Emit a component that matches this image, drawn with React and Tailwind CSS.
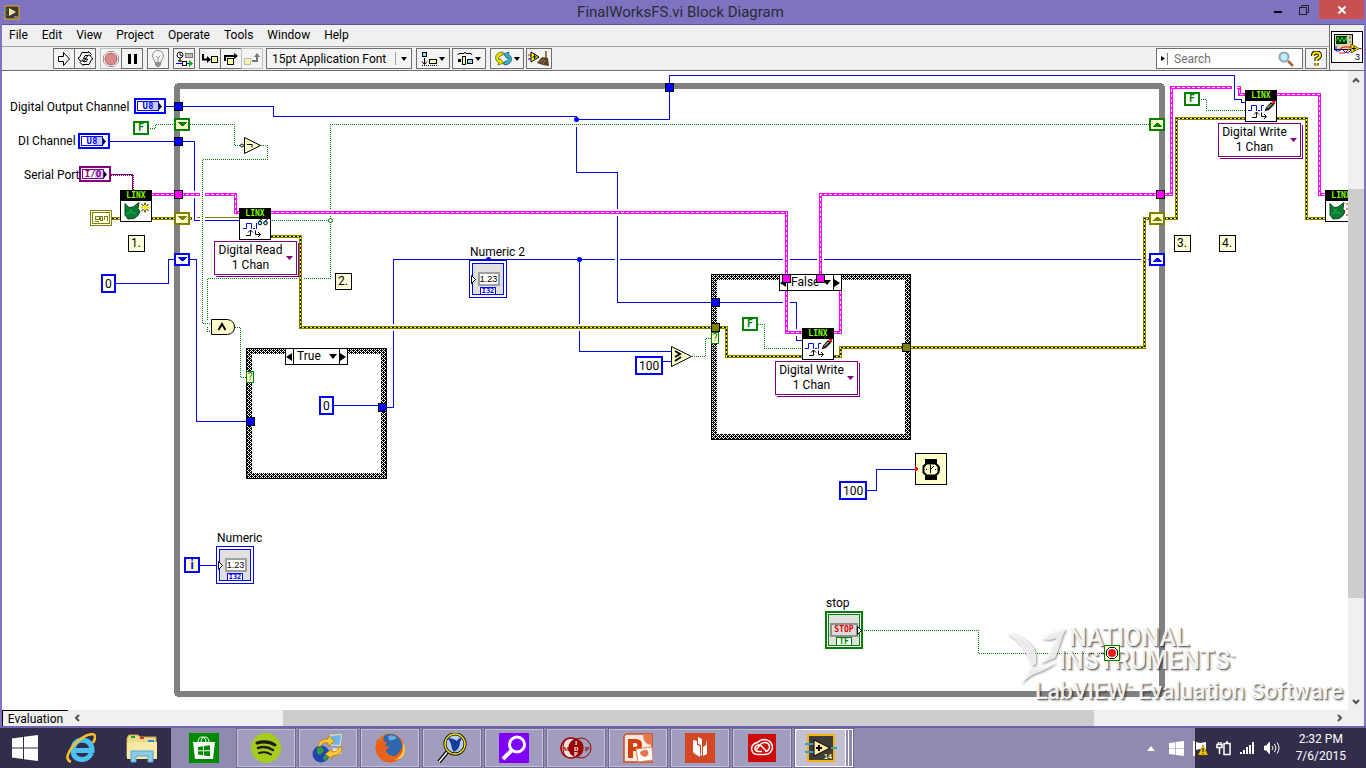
const BLUE = '#0000ff';
const GREEN = '#008000';

// Wires are drawn in order, a later wire jumps over the earlier ones
const WIRES = [
  { kind: 'int', d: 'M393.5 407.5V259.5H1150' },
  { kind: 'int', d: 'M386 407.5H393.5V259.5' },
  { kind: 'int', d: 'M166 106.5H273.5V116.5H576.5V119.5H669.5V75.5H1234.5V84' },
  { kind: 'int', d: 'M576.5 119V172.5H617.5V302.5H796.5V340.5H802' },
  { kind: 'int', d: 'M113 283.5H168.5V259.5H196.5V421.5H248' },
  { kind: 'int', d: 'M332 405.5H380' },
  { kind: 'int', d: 'M579.5 259V351.5H672' },
  { kind: 'int', d: 'M660 363.5V361.5H672' },
  { kind: 'int', d: 'M864 490.5H876.5V469.5H916' },
  { kind: 'int', d: 'M200 565.5H217' },
  { kind: 'bool', d: 'M149 128.5H155.5V124.5H234.5V145.5H241' },
  { kind: 'bool', d: 'M1150 124.5H330.5V278.5H207.5V331.5H211' },
  { kind: 'bool', d: 'M271 220.5H330' },
  { kind: 'bool', d: 'M235 327.5H240.5V377.5H247' },
  { kind: 'bool', d: 'M692 356.5H705.5V338.5H711' },
  { kind: 'bool', d: 'M758 324.5H764.5V348.5H802' },
  { kind: 'bool', d: 'M1200 99.5H1206.5V110.5H1245' },
  { kind: 'bool', d: 'M863 630.5H978.5V653.5H1104' },
  { kind: 'link', d: 'M151 194.5H235.5V212.5H239' },
  { kind: 'link', d: 'M271 212.5H786.5V332.5H802' },
  { kind: 'link', d: 'M834 332.5H840.5V285' },
  { kind: 'link', d: 'M820.5 276V194.5H1171.5V87.5H1239.5V94.5H1245' },
  { kind: 'link', d: 'M1277 94.5H1319.5V194.5H1325' },
  { kind: 'int', d: 'M1234.5 80V99.5H1241.5V102.5H1245' },
  { kind: 'error', d: 'M112 218.5H120' },
  { kind: 'error', d: 'M151 218.5H239' },
  { kind: 'error', d: 'M271 236.5H300.5V327.5H726.5V356.5H802' },
  { kind: 'error', d: 'M834 356.5H840.5V347.5H1144.5V218.5H1176.5V118.5H1245' },
  { kind: 'error', d: 'M1277 118.5H1306.5V218.5H1325' },
  { kind: 'int', d: 'M110 141.5H194.5V191' },
  { kind: 'int', d: 'M194.5 198V220.5H239' },
  { kind: 'bool', d: 'M261 145.5H267.5V159.5H202.5V323.5H211' },
  { kind: 'io', d: 'M111 174.5H132.5V191' },
];

function Wire({ kind, d }) {
  if (kind === 'int') {
    return (
      <>
        <path d={d} stroke="#fff" strokeWidth="5" />
        <path d={d} stroke={BLUE} />
      </>
    );
  }
  if (kind === 'bool') {
    return (
      <>
        <path d={d} stroke="#fff" strokeWidth="5" />
        <path d={d} stroke="url(#dots)" />
      </>
    );
  }
  if (kind === 'link') {
    return (
      <>
        <path d={d} stroke="#fff" strokeWidth="7" />
        <path d={d} stroke="#ff00ff" strokeWidth="3" />
        <path d={d} stroke="#fff" strokeDasharray="3 2" />
      </>
    );
  }
  if (kind === 'error') {
    return (
      <>
        <path d={d} stroke="#fff" strokeWidth="7" />
        <path d={d} stroke="#808000" strokeWidth="3" />
        <path d={d} stroke="#ffff00" />
        <path d={d} stroke="#000" strokeDasharray="2 2" />
      </>
    );
  }
  return (
    <>
      <path d={d} stroke="#800080" strokeWidth="2" strokeDasharray="1 1" />
      <path d={d} stroke="#800080" />
    </>
  );
}

function CaseFrame({ x, y, w, h }) {
  return (
    <>
      <rect x={x + 3} y={y + 3} width={w - 6} height={h - 6} stroke="url(#hatch)" strokeWidth="6" />
      <rect x={x + 0.5} y={y + 0.5} width={w - 1} height={h - 1} stroke="#000" />
    </>
  );
}

function Tunnel({ x, y, fill }) {
  return <rect x={x + 0.5} y={y + 0.5} width="8" height="8" fill={fill} stroke="#000" />;
}

function ShiftRegister({ x, y, color, fill, up }) {
  return (
    <g transform={`translate(${x} ${y})`}>
      <rect x="1" y="1" width="14" height="11" fill={fill} stroke={color} strokeWidth="2" />
      <path d={up ? 'M3 9h10l-4-4h-2z' : 'M3 4h10l-4 4h-2z'} fill={color} />
    </g>
  );
}

// Places a diagram object on the canvas, in window coordinates
function Node({ x, y, className = '', children }) {
  return (
    <div className={`absolute ${className}`} style={{ left: x - 2, top: y - 71 }}>
      {children}
    </div>
  );
}

function Label({ x, y, children }) {
  return <Node x={x} y={y} className="whitespace-nowrap leading-4">{children}</Node>;
}

function NumConst({ x, y, children }) {
  return (
    <Node x={x} y={y} className="flex h-[19px] items-center border-2 border-[#0000ff] bg-white px-[2px] leading-4">
      {children}
    </Node>
  );
}

function BoolConst({ x, y }) {
  return (
    <Node x={x} y={y} className="flex h-[14px] w-4 items-center justify-center border-2 border-[#008000] bg-white font-['DejaVu_Sans_Mono',monospace] text-[10px] font-bold leading-none text-[#008000]">
      F
    </Node>
  );
}

function Note({ x, y, children }) {
  return (
    <Node x={x} y={y} className="h-[17px] w-[17px] border border-black bg-[#ffffdc] pl-[2px] leading-[15px]">
      {children}
    </Node>
  );
}

function ControlTerminal({ x, y, tone, children }) {
  const tones = {
    blue: 'border-[#0000ff] text-[#0000ff]',
    purple: 'border-[#800080] text-[#800080]',
  };
  return (
    <Node x={x} y={y} className={`flex h-4 w-8 border-2 bg-white p-px ${tones[tone]}`}>
      <div className={`flex flex-1 items-center justify-center border bg-linear-to-r from-white from-60% to-[#c8c8ff] to-60% font-['DejaVu_Sans_Mono',monospace] text-[9px] font-bold leading-none ${tones[tone]}`}>
        {children}
      </div>
      <svg className="my-auto h-[7px] w-1" viewBox="0 0 4 7"><path d="M0 0v7l3-3.500z" fill="#000" /></svg>
    </Node>
  );
}

function NumericTerminal({ x, y }) {
  return (
    <Node x={x} y={y} className="h-[38px] w-[38px] border border-[#0000ff] bg-white p-[2px]">
      <div className="relative flex h-full flex-col items-center justify-between border border-[#0000ff] bg-[#e0e0e0] pt-2">
        <div className="ml-px w-[22px] border-2 border-[#a0a0a0] bg-white text-center font-['Liberation_Sans',sans-serif] text-[9px] leading-[10px]">1.23</div>
        <div className="h-[7px] w-4 border-x border-t border-[#0000ff] bg-white text-center font-['DejaVu_Sans_Mono',monospace] text-[7px] font-bold leading-[7px] text-[#0000ff]">I32</div>
        <svg className="absolute -left-[2px] top-[11px] h-[9px] w-[5px]" viewBox="0 0 5 9"><path d="M.5.5v8l4-4z" fill="#fff" stroke="#000" /></svg>
      </div>
    </Node>
  );
}

function Arrows() {
  return <path d="M6 16.500h4.500V11.500M8 13.500l2.500-2.500 2.500 2.500M15.500 11.500v4H20M18 13l2.500 2.500-2.500 2.500" stroke="#000" fill="none" />;
}

function WriteGlyph() {
  return (
    <svg className="block h-5 w-[30px]" viewBox="0 0 30 20" fill="none">
      <path d="M2 9.500h3.500v-5h5v5.500M12 9.500h2M15.500 10V4.500H18" stroke={BLUE} />
      <path d="M18.500 10.500l1.500-4 5-5.500 3.500 2.500-5.500 5.500z" fill="#222" />
      <path d="M21.500 7l4-4" stroke="#f5e58c" />
      <path d="M26 0h3v3h-2z" fill="#ff0000" />
      <Arrows />
    </svg>
  );
}

function ReadGlyph() {
  return (
    <svg className="block h-5 w-[30px]" viewBox="0 0 30 20" fill="none">
      <path d="M3 9.500h3.500v-5h5v5.500M13 9.500h2M16.500 4v6" stroke={BLUE} />
      <circle cx="20" cy="4" r="1.800" fill="#7ff" stroke="#000" />
      <circle cx="25.500" cy="4" r="1.800" fill="#7ff" stroke="#000" />
      <path d="M19 2l3-2M25 2l3-2" stroke="#000" />
      <Arrows />
    </svg>
  );
}

function OpenGlyph({ close }) {
  return (
    <svg className="block h-5 w-[30px]" viewBox="0 0 30 20">
      <path d="M4 2.500l4 4 4-.5 6-4.500-1 6 2 3-2 4-4 3-6 .5-3-4z" fill="#0a7a32" stroke="#064a1c" />
      <path d="M5 13l5-2 5 2M8 9l3 1" stroke="#25b050" fill="none" />
      {close ? (
        <path d="M20 3h2M20 8h2M20 14h2" stroke="#f00" />
      ) : (
        <>
          <path d="M24 2v9M19.500 6.500h9" stroke="#ffe600" strokeWidth="2" />
          <path d="M20.500 3l2 2M25.500 5l2-2M20.500 10l2-2M25.500 8l2 2M24 1.500v2.500M24 9v2.500" stroke="#000" />
        </>
      )}
    </svg>
  );
}

function LinxNode({ x, y, children }) {
  return (
    <Node x={x} y={y} className="h-8 w-8 overflow-hidden border border-black bg-white">
      <div className="h-[10px] bg-black text-center font-['DejaVu_Sans_Mono',monospace] text-[8px] font-bold leading-[9px] text-[#80ff00]">LINX</div>
      {children}
    </Node>
  );
}

function PolySelector({ x, y, children }) {
  return (
    <Node x={x} y={y}>
      <button type="button" className="flex h-[34px] w-[83px] items-center border border-[#800080] bg-white shadow-[1px_1px_0_#fff,2px_2px_0_#800080] outline-none">
        <span className="flex-1 whitespace-nowrap text-center leading-[15px]">{children}<br />1 Chan</span>
        <svg className="mr-[3px] h-1 w-[7px] shrink-0" viewBox="0 0 7 4"><path d="M0 0h7l-3.500 4z" fill="#800080" /></svg>
      </button>
    </Node>
  );
}

function CaseSelector({ x, y, value, other }) {
  return (
    <Node x={x} y={y} className="flex h-[17px] w-[63px] border border-black bg-white">
      <button type="button" aria-label="Previous case" className="w-2 border-r border-black">
        <svg className="h-2 w-[6px]" viewBox="0 0 6 8"><path d="M6 0v8l-6-4z" /></svg>
      </button>
      <div className="relative flex flex-1 items-center">
        <select aria-label="Case" defaultValue={value} className="w-full appearance-none bg-transparent pl-[3px] leading-[15px] outline-none">
          <option>{value}</option>
          <option>{other}</option>
        </select>
        <svg className="pointer-events-none absolute right-[2px] top-[5px] h-[5px] w-2" viewBox="0 0 8 5"><path d="M0 0h8l-4 5z" /></svg>
      </div>
      <button type="button" aria-label="Next case" className="w-2 border-l border-black">
        <svg className="h-2 w-[6px]" viewBox="0 0 6 8"><path d="M0 0v8l6-4z" /></svg>
      </button>
    </Node>
  );
}

function Diagram() {
  return (
    <main className="relative min-w-0 flex-1 overflow-hidden bg-white text-[12px] text-black">
      <svg className="absolute left-0 top-0 h-[639px] w-[1346px]" viewBox="2 71 1346 639" fill="none" shapeRendering="crispEdges">
        <defs>
          <pattern id="hatch" width="4" height="4" patternUnits="userSpaceOnUse">
            <rect width="4" height="4" fill="#000" />
            <path d="M1 0h1v1H1zM0 1h1v1H0zM2 1h1v1H2zM3 2h1v1H3zM0 3h1v1H0zM2 3h1v1H2z" fill="#fff" />
          </pattern>
          <pattern id="dots" width="2" height="2" patternUnits="userSpaceOnUse">
            <path d="M0 0h1v1H0zM1 1h1v1H1z" fill={GREEN} />
          </pattern>
        </defs>
        {WIRES.map((wire, i) => <Wire key={i} {...wire} />)}
        <rect x="177" y="86" width="985" height="608" rx="2" stroke="#808080" strokeWidth="6" />
        <CaseFrame x={246} y={348} w={141} h={131} />
        <CaseFrame x={711} y={274} w={200} h={166} />

        {/* Wire junctions */}
        <g fill={BLUE} shapeRendering="auto">
          <circle cx="576.500" cy="119.500" r="2.500" />
          <circle cx="579.500" cy="259.500" r="2.500" />
          <circle cx="488.500" cy="259.500" r="2.500" />
        </g>
        <circle cx="330.500" cy="220.500" r="2" stroke={GREEN} fill="#fff" shapeRendering="auto" />

        <Tunnel x={174} y={102} fill={BLUE} />
        <Tunnel x={174} y={137} fill={BLUE} />
        <Tunnel x={174} y={190} fill="#ff00ff" />
        <Tunnel x={665} y={83} fill={BLUE} />
        <Tunnel x={1156} y={190} fill="#ff00ff" />
        <Tunnel x={246} y={417} fill={BLUE} />
        <Tunnel x={378} y={403} fill={BLUE} />
        <Tunnel x={711} y={298} fill={BLUE} />
        <Tunnel x={711} y={323} fill="#808000" />
        <Tunnel x={902} y={343} fill="#808000" />

        <ShiftRegister x={174} y={118} color={GREEN} fill="#ffffcc" />
        <ShiftRegister x={174} y={212} color="#808000" fill="#ffffcc" />
        <ShiftRegister x={174} y={253} color={BLUE} fill="#fff" />
        <ShiftRegister x={1149} y={118} color={GREEN} fill="#ffffcc" up />
        <ShiftRegister x={1149} y={212} color="#808000" fill="#ffffcc" up />
        <ShiftRegister x={1149} y={253} color={BLUE} fill="#fff" up />

        {/* Not, And, Greater or equal */}
        <g shapeRendering="auto" stroke="#000" fill="#ffffcc">
          <path d="M244.500 137.500v16l16-8z" />
          <circle cx="242" cy="145.500" r="1.500" />
          <path d="M247 144.500h5v3" fill="none" />
          <path d="M211.500 319.500h16q7 1 7 7.500t-7 7.500h-16z" />
          <path d="M218.500 330l3.500-6 3.500 6" strokeWidth="2" fill="none" />
          <path d="M671.500 346.500v20l20-10z" />
          <path d="M675 351l5 3-5 3M675 361l6-4" strokeWidth="2" fill="none" />
        </g>

        {/* Wait (ms) */}
        <rect x="915.500" y="453.500" width="31" height="31" fill="#ffffcc" stroke="#000" />
        <path d="M915 466l3 3-3 3z" fill="#ff0000" />
        <rect x="925" y="459" width="12" height="21" fill="#000" />
        <rect x="938" y="467" width="2" height="4" fill="#000" />
        <path d="M926.500 463.500h9l3 3v6l-3 3h-9l-3-3v-6z" fill="#ffffcc" stroke="#000" strokeWidth="2" shapeRendering="auto" />
        <path d="M930.500 465v8M930 470l4-4M926 469.500h1M935 469.500h1" stroke="#000" />

        {/* Error constant */}
        <rect x="90.500" y="210.500" width="21" height="15" fill="#fff" stroke="#808000" />
        <rect x="92.500" y="212.500" width="17" height="11" stroke="#808000" />
        <path d="M95 216.500h4v3h-4zM100.500 216v4h2v-4zM104.500 220v-4h3v5M95 221.500h4" stroke="#808000" />
      </svg>

      <Label x={10} y={99}>Digital Output Channel</Label>
      <Label x={18} y={133}>DI Channel</Label>
      <Label x={24} y={167}>Serial Port 2</Label>
      <Label x={470} y={244}>Numeric 2</Label>
      <Label x={217} y={530}>Numeric</Label>
      <Label x={826} y={595}>stop</Label>

      <ControlTerminal x={134} y={98} tone="blue">U8</ControlTerminal>
      <ControlTerminal x={78} y={133} tone="blue">U8</ControlTerminal>
      <ControlTerminal x={79} y={166} tone="purple">I/O</ControlTerminal>

      <BoolConst x={133} y={121} />
      <BoolConst x={742} y={317} />
      <BoolConst x={1184} y={92} />

      <NumConst x={101} y={274}>0</NumConst>
      <NumConst x={319} y={396}>0</NumConst>
      <NumConst x={635} y={356}>100</NumConst>
      <NumConst x={839} y={481}>100</NumConst>

      <Node x={184} y={557} className="flex h-4 w-4 items-center justify-center border-2 border-[#0000ff] bg-[#ffffcc] font-bold leading-none text-[#0000ff]">i</Node>

      <Note x={128} y={235}>1.</Note>
      <Note x={335} y={273}>2.</Note>
      <Note x={1174} y={235}>3.</Note>
      <Note x={1219} y={235}>4.</Note>

      <LinxNode x={120} y={190}><OpenGlyph /></LinxNode>
      <LinxNode x={239} y={208}><ReadGlyph /></LinxNode>
      <LinxNode x={802} y={328}><WriteGlyph /></LinxNode>
      <LinxNode x={1245} y={90}><WriteGlyph /></LinxNode>
      <LinxNode x={1325} y={190}><OpenGlyph close /></LinxNode>

      <PolySelector x={214} y={241}>Digital Read</PolySelector>
      <PolySelector x={775} y={361}>Digital Write</PolySelector>
      <PolySelector x={1218} y={123}>Digital Write</PolySelector>

      <CaseSelector x={285} y={348} value="True" other="False" />
      <CaseSelector x={779} y={274} value="False" other="True" />
      <Node x={782} y={274} className="h-[9px] w-[9px] border border-black bg-[#ff00ff]" />
      <Node x={816} y={274} className="h-[9px] w-[9px] border border-black bg-[#ff00ff]" />

      {/* Case selector terminals */}
      <Node x={246} y={371} className="h-3 w-2 border border-[#008000] bg-[#ffffcc] text-center text-[10px] leading-[10px] text-[#008000]">?</Node>
      <Node x={711} y={332} className="h-3 w-2 border border-[#008000] bg-[#ffffcc] text-center text-[10px] leading-[10px] text-[#008000]">?</Node>

      <NumericTerminal x={469} y={260} />
      <NumericTerminal x={216} y={546} />

      {/* Stop button terminal */}
      <Node x={825} y={611} className="h-[38px] w-[38px] border-2 border-[#008000] bg-white p-px">
        <div className="relative flex h-full flex-col items-center justify-between border border-[#008000] bg-[#e0e0e0] pt-2">
          <div className="w-[28px] border-2 border-[#909090] bg-[#dcdcdc] text-center font-['DejaVu_Sans_Mono',monospace] text-[8px] font-bold leading-[10px] text-[#e00000]">STOP</div>
          <div className="h-2 w-4 border-x border-t border-[#008000] bg-white text-center font-['DejaVu_Sans_Mono',monospace] text-[8px] font-bold leading-[7px] text-[#008000]">TF</div>
          <svg className="absolute -right-[3px] top-[11px] h-[9px] w-[5px]" viewBox="0 0 5 9"><path d="M.5.5v8l4-4z" fill="#fff" stroke="#000" /></svg>
        </div>
      </Node>

      {/* Watermark */}
      <Node x={1004} y={626} className="pointer-events-none">
        <svg className="h-[72px] w-16 drop-shadow-[1px_1px_1px_#00000080]" viewBox="0 0 64 72" fill="#fff" fillOpacity="0.8">
          <path d="M3 8q12 0 20 7 8 6 9 14v9l-4 2-3-7Q17 15 3 8z" />
          <path d="M38 13q5-5 10-7 7-2 14-3-3 5-5 12-3 10-6 17l-15 6 10-12q2-8 7-14l-8 2z" />
          <path d="M17 58l10-18 8 2 18-6q-8 7-20 11-8 3-16 11z" />
        </svg>
      </Node>
      <div className="pointer-events-none whitespace-nowrap text-white/90 [text-shadow:1px_1px_1px_#00000080,2px_2px_2px_#00000040]">
        <Node x={1069} y={626} className="text-[25px] font-medium leading-[24px]">NATIONAL</Node>
        <Node x={1059} y={649} className="text-[25px] font-medium leading-[24px]">INSTRUMENTS<sup className="-top-2 text-[8px]">™</sup></Node>
        <Node x={1035} y={680} className="text-[23px] font-medium leading-[24px]">LabVIEW<sup className="-top-2 text-[8px]">™</sup> Evaluation Software</Node>
      </div>

      {/* Loop condition */}
      <Node x={1104} y={645} className="flex h-4 w-4 items-center justify-center border border-[#008000] bg-[#ffffcc]">
        <svg className="h-[14px] w-[14px]" viewBox="0 0 14 14">
          <path d="M4.500 1.500h5l3 3v5l-3 3h-5l-3-3v-5z" fill="#fff" stroke="#000" />
          <circle cx="7" cy="7" r="4" fill="#f01818" />
        </svg>
      </Node>
    </main>
  );
}

function ToolButton({ label, wide, faded, className = '', children }) {
  return (
    <button
      type="button"
      aria-label={label}
      className={`flex h-[21px] items-center justify-center border bg-[#f4f4f4] ${wide ? 'w-[34px]' : 'w-[22px]'} ${faded ? 'border-[#c0c0c0]' : 'border-[#6e6e6e]'} ${className}`}
    >
      {children}
    </button>
  );
}

function Caret() {
  return <svg className="h-1 w-[6px]" viewBox="0 0 6 4"><path d="M0 0h6l-3 4z" /></svg>;
}

function Toolbar() {
  return (
    <div className="flex h-6 items-center border-t border-[#a0a0a0] pl-[51px] pr-[2px]">
      <ToolButton label="Run">
        <svg className="h-4 w-4" viewBox="0 0 16 16"><path d="M2.500 5.500h5v-4l6 6.500-6 6.500v-4h-5z" fill="#fff" stroke="#000" /></svg>
      </ToolButton>
      <ToolButton label="Run Continuously" className="-ml-px">
        <svg className="h-[15px] w-[17px]" viewBox="0 0 17 15" fill="#fff" stroke="#000">
          <path d="M2.500 6.500L5 1.500h6.500V.5l3 3-3 3V4.500H8L6.500 7.500H9L5 12 1 7z" />
          <path d="M14.500 8.500L12 13.500H6v1l-3-3 3-3v2h3.500l1-2.500H8L12 3.500 16 8z" />
        </svg>
      </ToolButton>
      <ToolButton label="Abort Execution" faded className="ml-1">
        <svg className="h-4 w-4" viewBox="0 0 16 16"><path d="M5 .5h6L15.500 5v6L11 15.500H5L.5 11V5z" fill="#fff" stroke="#999" /><circle cx="8" cy="8" r="6" fill="#d98a8a" stroke="#b06060" /></svg>
      </ToolButton>
      <ToolButton label="Pause" className="-ml-px">
        <svg className="h-3 w-[11px]" viewBox="0 0 11 12"><path d="M1 1h3v10H1zM7 1h3v10H7z" /></svg>
      </ToolButton>
      <ToolButton label="Highlight Execution" className="ml-1">
        <svg className="h-[17px] w-3" viewBox="0 0 12 17"><path d="M3 11Q.5 8 .5 6 1 .5 6 .5T11.500 6q0 2-2.500 5v2H3z" fill="#f4f4f4" stroke="#909090" /><path d="M4 6l2 2 2-2M6 8v4" stroke="#999" fill="none" /><path d="M3 12h6v3l-2 2H5l-2-2z" fill="#909090" /></svg>
      </ToolButton>
      <ToolButton label="Retain Wire Values" className="ml-1">
        <svg className="h-4 w-[17px]" viewBox="0 0 17 16" fill="none" stroke="#000">
          <circle cx="4" cy="4" r="3" fill="#fff" /><path d="M4 2v2l2 1M4 7v4M2 10h4" />
          <rect x="9.500" y="2.500" width="7" height="4" fill="#bbb" stroke="#777" />
          <path d="M0 12.500h6M10 12.500h4" stroke={BLUE} /><rect x="6.500" y="10.500" width="4" height="4" fill="#fff" /><path d="M13 9v7l4-3.500z" fill="#00b000" stroke="none" />
        </svg>
      </ToolButton>
      <ToolButton label="Step Into" className="ml-1">
        <svg className="h-3 w-4" viewBox="0 0 16 12"><path d="M1 1v5.500h5" stroke="#000" strokeWidth="2" fill="none" /><path d="M5 3v7l4-3.500z" /><rect x="9.500" y="3.500" width="6" height="6" fill="#ffffa0" stroke="#000" /></svg>
      </ToolButton>
      <ToolButton label="Step Over" className="-ml-px">
        <svg className="h-3 w-4" viewBox="0 0 16 12"><path d="M2 8V3h9" stroke="#000" strokeWidth="2" fill="none" /><path d="M11 0v6l4-3z" /><rect x="4.500" y="5.500" width="6" height="6" fill="#ffffa0" stroke="#000" /></svg>
      </ToolButton>
      <ToolButton label="Step Out" faded className="-ml-px">
        <svg className="h-3 w-4" viewBox="0 0 16 12"><rect x=".5" y="5.500" width="6" height="6" fill="#f5f5a8" stroke="#bbb" /><path d="M8 8h5V3" stroke="#777" strokeWidth="2" fill="none" /><path d="M10 4h6l-3-4z" fill="#777" /></svg>
      </ToolButton>
      <div className="relative ml-[3px] h-[21px] w-[146px] border border-[#6e6e6e] bg-[#f4f4f4]">
        <select aria-label="Text settings" className="h-full w-full appearance-none bg-transparent pl-[5px] text-[12px] leading-[18px] outline-none">
          <option>15pt Application Font</option>
        </select>
        <div className="pointer-events-none absolute inset-y-[3px] right-0 flex w-4 items-center justify-center border-l border-[#a0a0a0]"><Caret /></div>
      </div>
      <ToolButton label="Align Objects" wide className="ml-1 gap-[2px]">
        <svg className="h-[14px] w-4" viewBox="0 0 16 14" stroke="#000"><rect x="1.500" y=".5" width="4" height="4" fill="#7fdfff" /><path d="M3.500 6v6M1 9.500l2.500 3L6 9.500" fill="none" /><rect x="8.500" y="7.500" width="7" height="4" fill="#ffffa0" /><path d="M1 13.500h15" strokeDasharray="1 1" /></svg>
        <Caret />
      </ToolButton>
      <ToolButton label="Distribute Objects" wide className="ml-[2px] gap-[2px]">
        <svg className="h-[14px] w-4" viewBox="0 0 16 14" stroke="#000"><path d="M1 3l1-1.500h5L8 0l1 1.500h5L15 3" fill="none" /><path d="M1 7h3v3H1z" stroke="none" /><rect x="5.500" y="4.500" width="3" height="8" fill="#ffffa0" /><rect x="10.500" y="7.500" width="5" height="4" fill="#7fdfff" /></svg>
        <Caret />
      </ToolButton>
      <ToolButton label="Reorder" wide className="ml-1 gap-[2px]">
        <svg className="h-[15px] w-[17px]" viewBox="0 0 17 15">
          <path d="M8 1Q1 1 .5 7q0 3 3 4.500L3 14l6-2-4-4.500-.5 1.500Q3 8 3.500 7 4.500 4.500 8 4z" fill="#e6e000" stroke="#6a6800" strokeWidth=".8" />
          <path d="M9 14q7 0 7.500-6 0-3-3-4.500L14 1 8.500 3l3.500 4.500.5-1.500q1.500 1 1 2-1 2.500-4.500 3z" fill="#3ab0cc" stroke="#14586a" strokeWidth=".8" />
        </svg>
        <Caret />
      </ToolButton>
      <ToolButton label="Clean Up Diagram" className="ml-[2px] w-[26px]">
        <svg className="h-4 w-[22px]" viewBox="0 0 22 16"><path d="M0 4h4" stroke="#f00" /><path d="M0 8h4" stroke={BLUE} /><path d="M3 1v10l8-5z" fill="#ffff00" stroke="#000" /><path d="M4.500 6h4M6.500 4v4" stroke="#000" /><path d="M17 0h2v7h-2z" fill="#9a7652" /><path d="M14 6l6 1 1 8-6-1-6-2z" fill="#5a4026" /><path d="M12 11l4-3M15 13l2-4" stroke="#9a7652" /></svg>
      </ToolButton>

      <label className="ml-auto flex h-[21px] w-[147px] items-center border border-[#6e6e6e] bg-white">
        <svg className="ml-1 h-[5px] w-1" viewBox="0 0 4 5"><path d="M0 0v5l4-2.500z" /></svg>
        <span className="mx-[2px] h-3 border-l border-[#808080]" />
        <input type="search" aria-label="Search" placeholder="Search" className="min-w-0 flex-1 bg-transparent pl-1 text-[12px] outline-none placeholder:text-[#707070]" />
        <svg className="mr-2 h-4 w-4" viewBox="0 0 16 16"><circle cx="6" cy="6" r="4.500" fill="#c4ecfa" stroke="#8aa8c0" strokeWidth="2" /><path d="M10 10l5 5" stroke="#b0602c" strokeWidth="2.500" /></svg>
      </label>
      <button type="button" aria-label="Context Help" className="ml-[2px] flex h-[21px] w-[22px] items-center justify-center border border-[#6e6e6e] bg-[#f4f4f4]">
        <svg className="h-[15px] w-[11px]" viewBox="0 0 11 15" fill="none"><path d="M2 5q0-3.500 3.500-3.500T9 4.500Q9 6.500 5.500 8v2M5.500 12v2.500" stroke="#000" strokeWidth="4" /><path d="M2 5q0-3.500 3.500-3.500T9 4.500Q9 6.500 5.500 8v2M5.500 12v2.500" stroke="#ffe800" strokeWidth="2.200" /></svg>
      </button>
    </div>
  );
}

function Chevron({ dir }) {
  const paths = {
    up: 'M1 6l3-3 3 3',
    down: 'M1 2l3 3 3-3',
    left: 'M6 1L3 4l3 3',
    right: 'M2 1l3 3-3 3',
  };
  return <svg className="h-2 w-2" viewBox="0 0 8 8" fill="none" stroke="#505050" strokeWidth="2"><path d={paths[dir]} /></svg>;
}

function TaskIcon({ name }) {
  switch (name) {
    case 'Store':
      return (
        <svg className="h-[30px] w-[30px]" viewBox="0 0 30 30">
          <rect width="30" height="30" fill="#008a00" />
          <path d="M9 10q0-6 4-6t4 6M12 10q0-6 4-6t4 6" stroke="#fff" fill="none" />
          <path d="M4 9h22l-2 17H6z" fill="#fff" />
          <path d="M9 14l5-.7v4H9zM15 13l6-.8v5.100h-6zM9 18.300h5v4l-5-.7zM15 18.300h6v5l-6-.8z" fill="#008a00" />
        </svg>
      );
    case 'Spotify':
      return (
        <svg className="h-[30px] w-[30px]" viewBox="0 0 30 30" fill="none" stroke="#1c1c1c" strokeLinecap="round">
          <circle cx="15" cy="15" r="15" fill="#a5cc1a" stroke="none" />
          <path d="M6 10q10-3 18 2" strokeWidth="3" /><path d="M7 15q8-2.500 15 2" strokeWidth="2.500" /><path d="M8 20q7-2 12 1.500" strokeWidth="2" />
        </svg>
      );
    case 'Network':
      return (
        <svg className="h-[30px] w-8" viewBox="0 0 32 30">
          <path d="M17 1l14-1-2 14-11-1z" fill="#dcd8cc" stroke="#99978c" /><path d="M19 3l10-1-1.500 10-8-.5z" fill="#66b4f0" /><path d="M20 15l10 1-1 5-8-1z" fill="#e8e4da" />
          <circle cx="9" cy="21" r="8.500" fill="#2144b0" /><path d="M5 15l5-1 2 4-4 4-3-2zM11 24l4-3 1 4-4 3z" fill="#2f9a44" />
          <path d="M6 14Q7 5 16 6V3l7 5-7 5v-3q-6-1-7 3z" fill="#ffc733" stroke="#a87400" strokeWidth=".7" /><path d="M30 14q0 9-10 9v3l-7-5 7-5v3q6 0 7-5z" fill="#ffc733" stroke="#a87400" strokeWidth=".7" />
        </svg>
      );
    case 'Firefox':
      return (
        <svg className="h-[30px] w-[30px]" viewBox="0 0 30 30">
          <circle cx="15" cy="15" r="14.500" fill="#e8701a" />
          <path d="M9 3q9-5 16 3 5 8-1 15-7 5-12-1Q7 12 9 3z" fill="#2c66ae" /><path d="M13 3q6-2 9 2-4 3-8 2z" fill="#6aa8dc" />
          <path d="M28 9q4 14-9 20Q3 31 .5 15L2 6l4 3q3-1 6 0l-2 4 5 1-4 3-1 4q5 5 10 2 7-4 8-14z" fill="#e8601a" /><path d="M27 9q4 13-8 18 13-1 10.500-14z" fill="#ffd03c" />
        </svg>
      );
    case 'Wizard':
      return (
        <svg className="h-[30px] w-[30px]" viewBox="0 0 30 30">
          <path d="M11 18L2 29" stroke="#000" strokeWidth="4" /><path d="M11 18L2 29" stroke="#fff" strokeWidth="1.500" />
          <circle cx="18" cy="11" r="10" fill="#b8cdea" stroke="#000" strokeWidth="3" /><circle cx="18" cy="11" r="10" fill="none" stroke="#f0e000" strokeWidth="1.500" />
          <path d="M10 5q6 0 10 3 1-3 5-3l-2 4q0 7-6 10l-2-3q-1-8-5-11z" fill="#143c9c" />
        </svg>
      );
    case 'Search':
      return (
        <svg className="h-[30px] w-[30px]" viewBox="0 0 30 30" fill="none" stroke="#fff">
          <rect width="30" height="30" fill="#8000ff" stroke="none" />
          <circle cx="18" cy="11.500" r="7.500" strokeWidth="3" /><path d="M12.500 17.500L4 26" strokeWidth="4" />
        </svg>
      );
    case 'MIDP':
      return (
        <svg className="h-[22px] w-8" viewBox="0 0 32 22" fill="none">
          <circle cx="21" cy="11" r="10" stroke="#900" /><circle cx="11" cy="11" r="10" fill="#f0e0e0" stroke="#900" strokeWidth="1.500" />
          <path d="M5 3q-4 8 0 16" stroke="#900" /><path d="M16 1.500a11 10 0 0 1 0 19 11 10 0 0 1 0-19z" fill="#900" />
          <g fill="#900" fontSize="7" fontWeight="bold" fontFamily="Liberation Serif, serif"><text x="3" y="14">M</text><text x="25" y="14">P</text></g>
          <g fill="#fff" fontSize="6" fontWeight="bold" fontFamily="Liberation Serif, serif"><text x="15" y="8">I</text><text x="14" y="14">D</text><text x="14" y="19">P</text></g>
        </svg>
      );
    case 'PowerPoint':
      return (
        <svg className="h-[30px] w-[30px]" viewBox="0 0 30 30">
          <path d="M3 1h26v28H1V3z" fill="#fbe8de" stroke="#d8491c" strokeWidth="1.500" /><path d="M20 1h9v11q-9 0-9-11z" fill="#e8764c" />
          <path d="M5 25V6h8q6 0 6 6t-6 6h-3v7z" fill="#d2400f" /><path d="M10 10h2.500q2 0 2 2t-2 2H10z" fill="#fbe8de" />
          <path d="M13 16l16-2 1 13-15 2z" fill="#fff" stroke="#e08060" /><path d="M17 19q5-4 8-1 2 4-3 6-5-1-5-5z" fill="#e8764c" />
        </svg>
      );
    case 'Reader':
      return (
        <svg className="h-[30px] w-[30px]" viewBox="0 0 30 30">
          <rect width="30" height="30" fill="#d24726" /><path d="M8 7v11q0 2 2 3l5 3V13l-3-1V8zM13 4v7l3 1v9l-3-2 4 4V6zM18 14v9l4-2V6l-1 6z" fill="#fff" />
        </svg>
      );
    case 'Creative Cloud':
      return (
        <svg className="h-7 w-7" viewBox="0 0 28 28" fill="none" stroke="#fff" strokeWidth="1.500">
          <rect width="28" height="28" fill="#cf0a0a" stroke="none" />
          <path d="M10 20.500q-6 0-6.500-6 .5-5 6-6 2.500-3 7-3 7 .5 8 7.500-.5 7-7.500 7.500z" />
          <path d="M17 17.500q4.500-.5 4.500-5-.5-4-5-4-3 0-5 3l-3 4M14 17.500h-4q-3-.5-3-3.500.5-3 4-3 2 0 3.500 2l3.500 4" />
        </svg>
      );
    default:
      return (
        <svg className="h-7 w-8" viewBox="0 0 32 28">
          <rect x="3" y="1" width="26" height="26" fill="#403c38" stroke="#f4b400" strokeWidth="2" />
          <path d="M0 10h9M0 18h9M26 14h6" stroke="#3a9ad8" strokeWidth="2" /><path d="M9 6v16l16-8z" fill="#ffe9a0" stroke="#000" />
          <path d="M11 14h6M14 11v6" stroke="#000" strokeWidth="2" /><text x="19" y="25" fill="#fff0b0" fontSize="7" fontWeight="bold" fontFamily="Liberation Sans, sans-serif">14</text>
        </svg>
      );
  }
}

const TASKS = ['Spotify', 'Network', 'Firefox', 'Wizard', 'Search', 'MIDP', 'PowerPoint', 'Reader', 'Creative Cloud'];

function Taskbar() {
  return (
    <footer className="flex h-10 shrink-0 bg-[#8e8bae] text-white">
      <div className="flex w-[171px] items-center bg-[#312d4b]">
        <button type="button" aria-label="Start" className="ml-3">
          <svg className="h-[26px] w-[26px]" viewBox="0 0 26 26" fill="#fff"><path d="M0 3.500L11 2v10.500H0zM12 1.800L26 0v12.500H12zM0 13.500h11V24L0 22.500zM12 13.500h14V26l-14-1.800z" /></svg>
        </button>
        <button type="button" aria-label="Internet Explorer" className="ml-7">
          <svg className="h-[30px] w-[30px]" viewBox="0 0 30 30" fill="none">
            <path d="M25.500 20q-3 6.500-9.500 6.500Q7 26 7 17q.5-9.500 9.500-10Q26 8 26 17.500H9" stroke="#4cc0f0" strokeWidth="5" />
            <path d="M5 29Q-3 26 7 13 18 1 27 1q4 2 0 9" stroke="#f5c02a" strokeWidth="2.500" />
          </svg>
        </button>
        <button type="button" aria-label="File Explorer" className="ml-[30px]">
          <svg className="h-[30px] w-8" viewBox="0 0 32 30">
            <path d="M1 5l2-3h9l2 2h16v20H1z" fill="#f0d888" stroke="#c8a850" /><path d="M5 3h4v2H5z" fill="#18a040" /><path d="M14 4h4v2h-4z" fill="#e03020" /><path d="M22 7h6v2h-6z" fill="#2090e0" />
            <path d="M1 9h30v17H1z" fill="#f8e8a8" /><path d="M5 29V18h22v11h-5v-6H10v6z" fill="#8ccce8" stroke="#58a8d0" />
          </svg>
        </button>
      </div>
      <button type="button" aria-label="Store" className="mx-[18px] self-center"><TaskIcon name="Store" /></button>
      <div className="flex gap-1 py-px">
        {TASKS.map(name => (
          <button key={name} type="button" aria-label={name} className="flex w-[58px] items-center justify-center border border-[#c4c2d8] bg-[#a09dbd] outline outline-[#6f6b94]">
            <TaskIcon name={name} />
          </button>
        ))}
        <button type="button" aria-label="LabVIEW" className="flex w-[58px] border border-white outline outline-[#6f6b94]">
          <span className="flex h-full flex-1 items-center justify-center bg-[#c3c1d4]"><TaskIcon name="LabVIEW" /></span>
          <span className="h-full w-1 border-x border-white" />
          <span className="h-full w-[3px]" />
        </button>
      </div>
      <div className="ml-auto flex items-center">
        <button type="button" aria-label="Show hidden icons" className="mr-[14px]"><svg className="h-[5px] w-2" viewBox="0 0 8 5"><path d="M0 5h8L4 0z" fill="#fff" /></svg></button>
        <svg className="mr-[11px] h-[15px] w-[15px]" viewBox="0 0 26 26" fill="#fff"><path d="M0 3.500L11 2v10.500H0zM12 1.800L26 0v12.500H12zM0 13.500h11V24L0 22.500zM12 13.500h14V26l-14-1.800z" /></svg>
      </div>
      <div className="flex w-[171px] items-center bg-[#312d4b]">
        <svg className="-ml-[2px] h-4 w-[15px]" viewBox="0 0 15 16"><path d="M1 1v15" stroke="#fff" strokeWidth="2" /><path d="M3 2l4 1 6-1v8l-6-1-4 1z" fill="#fff" /><path d="M10 5l5 10H5z" fill="#f5c800" stroke="#806000" strokeWidth=".5" /><path d="M10 8v4M10 13v1" stroke="#000" /></svg>
        <svg className="ml-2 h-4 w-[15px]" viewBox="0 0 15 16" fill="none" stroke="#fff"><path d="M1 4.500h5v3H1zM2.500 2v2M5 2v2M3.500 8v6" strokeWidth="1.500" /><path d="M8 3.500h6v11H8zM10 2h2" strokeWidth="1.500" /></svg>
        <svg className="ml-[9px] h-3 w-[15px]" viewBox="0 0 15 12" fill="#fff"><path d="M0 10h2v2H0zM3 8h2v4H3zM6 5h2v7H6zM9 3h2v9H9zM12 0h2v12h-2z" /></svg>
        <svg className="ml-[9px] h-[14px] w-4" viewBox="0 0 16 14" fill="none" stroke="#fff"><path d="M.5 5h2l3-4v12l-3-4h-2z" fill="#fff" /><path d="M8 5q2 2 0 4M10.500 3q3 4 0 8M13 1.500q4 5.500 0 11" /></svg>
        <div className="ml-auto mr-5 text-center text-[12px] leading-[17px]">2:32 PM<br />7/6/2015</div>
      </div>
    </footer>
  );
}

const MENUS = ['File', 'Edit', 'View', 'Project', 'Operate', 'Tools', 'Window', 'Help'];

export default function App() {
  return (
    <div className="flex h-screen flex-col bg-[#7d73c0] font-['Roboto',sans-serif] text-[12px] text-black">
      <header className="flex h-6 shrink-0 items-start">
        <svg className="ml-1 mt-[5px] h-[15px] w-4" viewBox="0 0 16 15"><rect x="1" y="1" width="14" height="13" fill="#3c3a36" stroke="#f0b400" /><path d="M0 5h4M0 10h4" stroke="#3a7a9a" /><path d="M5 3v8l7-4z" fill="#ffe9a0" /><path d="M6 7h3M10 12h4" stroke="#ccc" /></svg>
        <h1 className="flex-1 pl-[76px] text-center text-[15px] leading-[25px] text-[#2b2b33]">FinalWorksFS.vi Block Diagram</h1>
        <div className="flex">
          <button type="button" aria-label="Minimize" className="flex h-[19px] w-[26px] items-end justify-center pb-[6px]"><span className="h-[2px] w-2 bg-black" /></button>
          <button type="button" aria-label="Restore" className="flex h-[19px] w-[26px] items-center justify-center">
            <svg className="h-[10px] w-[10px]" viewBox="0 0 10 10" fill="none" stroke="#222"><path d="M2.500 2.500v-2h7v7h-2" /><rect x=".5" y="2.500" width="7" height="7" /></svg>
          </button>
          <button type="button" aria-label="Close" className="ml-[2px] mr-[2px] flex h-[19px] w-[45px] items-center justify-center bg-[#c75050]">
            <svg className="h-2 w-2" viewBox="0 0 8 8"><path d="M.5.5l7 7M7.500.5l-7 7" stroke="#fff" strokeWidth="2" /></svg>
          </button>
        </div>
      </header>

      <div className="mx-[2px] flex min-h-0 flex-1 flex-col border-t border-[#5f559c] bg-[#f0f0f0]">
        <div className="flex border-b border-[#6e6e6e]">
          <div className="min-w-0 flex-1">
            <nav className="flex h-[21px] items-center pb-[2px]">
              {MENUS.map(name => (
                <button key={name} type="button" className="px-[7px] leading-4">{name}</button>
              ))}
            </nav>
            <Toolbar />
          </div>
          <div className="w-[35px] border-l border-[#6e6e6e] pl-px pt-[6px]">
            <svg className="h-8 w-8" viewBox="0 0 32 32">
              <rect x=".5" y=".5" width="31" height="31" fill="#fff" stroke="#000" />
              <rect x="3.500" y="3.500" width="18" height="15" fill="#d8d4b0" stroke="#000" /><rect x="5" y="5" width="11" height="8" fill="#003000" />
              <path d="M5 10l2-4 2 5 2-5 2 5 2-5 1 4" fill="none" stroke="#20d040" /><path d="M19 5v3M19 10v2" stroke="#555" />
              <path d="M5 15v5h3q2-4 5 0t7-1" fill="none" stroke={BLUE} /><path d="M9 20q0-4 4-4h7M8 22h6l4-4" fill="none" stroke="#f00" />
              <path d="M20 13v9l8-4.500z" fill="#ffe800" stroke="#665c00" /><path d="M21 17.500h4M23 15.500v4" stroke="#000" /><path d="M28 17.500h3" stroke="#f00" />
              <text x="24" y="29" fontSize="9" fontFamily="Liberation Sans, sans-serif">3</text>
            </svg>
          </div>
        </div>

        <div className="flex min-h-0 flex-1">
          <Diagram />
          <div className="flex w-4 flex-col items-center">
            <div className="flex h-[17px] items-center"><Chevron dir="up" /></div>
            <div className="flex-[101]" />
            <div className="w-full flex-[409] bg-[#cdcdcd]" />
            <div className="flex-[95]" />
            <div className="flex h-[17px] items-center"><Chevron dir="down" /></div>
          </div>
        </div>

        <div className="flex h-4 items-center">
          <button type="button" className="h-full w-[66px] border-l border-t border-black text-center leading-[14px]">Evaluation</button>
          <div className="flex w-[17px] justify-center"><Chevron dir="left" /></div>
          <div className="flex-[198]" />
          <div className="h-full flex-[811] bg-[#cdcdcd]" />
          <div className="flex-[237]" />
          <div className="mr-4 flex w-[17px] justify-center"><Chevron dir="right" /></div>
        </div>
      </div>
      <div className="h-[2px] shrink-0 bg-[#6d64ac]" />
      <Taskbar />
    </div>
  );
}
